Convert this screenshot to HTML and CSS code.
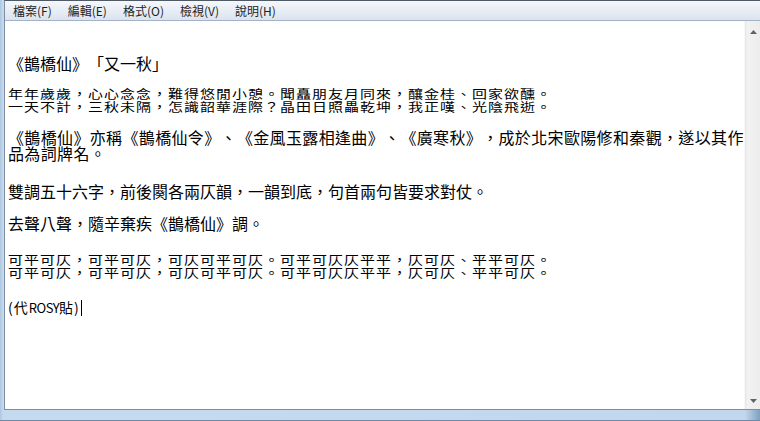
FILE: index.html
```html
<!DOCTYPE html>
<html lang="zh-Hant">
<head>
    <meta charset="UTF-8">
    <meta name="viewport" content="width=device-width, initial-scale=1.0">
    <title>鵲橋仙 - 記事本</title>
    <link rel="stylesheet" href="styles.css">
</head>
<body>
    <div class="frame">
        <div class="client">
            <!-- Menu bar -->
            <ul class="menubar">
                <li>檔案(F)</li>
                <li>編輯(E)</li>
                <li>格式(O)</li>
                <li>檢視(V)</li>
                <li>說明(H)</li>
            </ul>

            <div class="body-row">
                <div class="editor">
                    <p class="big first">《鵲橋仙》「又一秋」</p>
                    <p class="small">
                        <span class="ln">年年歲歲，心心念念，難得悠閒小憩。聞矗朋友月同來，釀金桂、回家欲醺。</span>
                        <span class="ln">一天不計，三秋未隔，怎識韶華涯際？晶田日照畾乾坤，我正嘆、光陰飛逝。</span>
                    </p>
                    <p class="big wide">《鵲橋仙》亦稱《鵲橋仙令》、《金風玉露相逢曲》、《廣寒秋》，成於北宋歐陽修和秦觀，遂以其作<br>品為詞牌名。</p>
                    <p class="big loose">雙調五十六字，前後闋各兩仄韻，一韻到底，句首兩句皆要求對仗。</p>
                    <p class="big">去聲八聲，隨辛棄疾《鵲橋仙》調。</p>
                    <p class="small loose">
                        <span class="ln">可平可仄，可平可仄，可仄可平可仄。可平可仄仄平平，仄可仄、平平可仄。</span>
                        <span class="ln">可平可仄，可平可仄，可仄可平可仄。可平可仄仄平平，仄可仄、平平可仄。</span>
                    </p>
                    <p class="small sign">
                        <span class="ln">(代<span class="latin">ROSY</span>貼)<span class="caret"></span></span>
                    </p>
                </div>

                <!-- Vertical scrollbar -->
                <div class="scrollbar">
                    <svg class="arrow" width="17" height="17" viewBox="0 0 17 17">
                        <path d="M5 11 L8.5 7 L12 11 Z" fill="#5f6368"/>
                    </svg>
                    <svg class="arrow" width="17" height="17" viewBox="0 0 17 17">
                        <path d="M5 7 L8.5 11 L12 7 Z" fill="#5f6368"/>
                    </svg>
                </div>
            </div>
        </div>
    </div>
</body>
</html>
```

FILE: styles.css
```css
body {
    margin: 0;
    padding: 0;
    width: 760px;
    height: 421px;
    overflow: hidden;
    background-color: #bcd2ea;
    font-family: "Noto Sans CJK TC", "Noto Sans", sans-serif;
    color: #000;
    text-spacing-trim: space-all;
}

/* Window frame */
.frame {
    box-sizing: border-box;
    height: 421px;
    padding: 0 8px 10px 4px;
    background: linear-gradient(to right, #aec6e0, #c6daef 3px, #c2d7ee 98%, #7fa0c0);
    border-bottom: 1px solid #6f8aa6;
    display: flex;
}

.client {
    flex: 1;
    display: flex;
    flex-direction: column;
    border: 1px solid #7d8ea2;
    border-top: 1px solid #4e5a66;
    background-color: #fff;
}

/* Menu */
.menubar {
    list-style: none;
    margin: 0;
    padding: 0;
    height: 19px;
    display: flex;
    align-items: center;
    background: linear-gradient(#f5f7fb, #e6ecf4 60%, #dbe3ee);
    border-bottom: 1px solid #a3b2c6;
}

.menubar li {
    padding: 0 8px;
    font-size: 12px;
    line-height: 19px;
    color: #1e1e1e;
}

.body-row {
    flex: 1;
    display: flex;
}

/* Text area */
.editor {
    flex: 1;
    padding: 34px 0 0 3px;
    white-space: nowrap;
    overflow: hidden;
}

.editor p {
    margin: 16px 0 0;
}

.editor p.first {
    margin-top: 0;
}

.editor p.loose {
    margin-top: 22px;
}

.big {
    font-size: 16px;
    line-height: 16px;
}

.big.wide {
    letter-spacing: 0.35px;
}

/* bitmap-like lines: squat glyphs on a 16px cell */
.small .ln {
    display: block;
    height: 13px;
    font-size: 15px;
    line-height: 13px;
    letter-spacing: 1px;
    transform: scaleY(0.8);
    transform-origin: 0 60%;
}

.editor p.sign {
    margin-top: 21px;
}

.sign .ln {
    font-size: 14px;
    transform: none;
}

.sign .latin {
    letter-spacing: -0.5px;
    font-size: 13px;
}

.caret {
    display: inline-block;
    width: 1px;
    height: 16px;
    margin-left: 1px;
    vertical-align: -3px;
    background-color: #000;
}

/* Scrollbar */
.scrollbar {
    width: 17px;
    display: flex;
    flex-direction: column;
    justify-content: space-between;
    padding: 2px 0 0;
    background: linear-gradient(to right, #e3e3e3, #f2f2f2 2px, #ececec);
    border-left: 1px solid #f8f8f8;
}

.arrow {
    display: block;
}
```
